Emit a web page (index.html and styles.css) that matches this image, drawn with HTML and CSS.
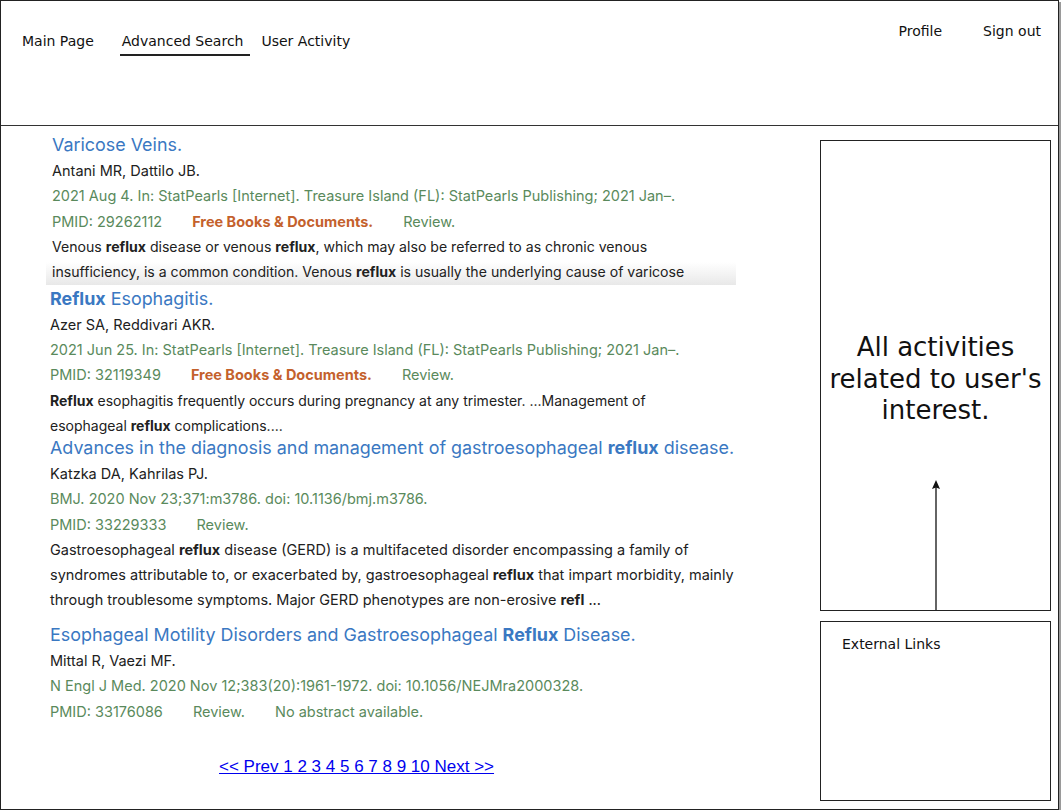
FILE: index.html
```html
<!DOCTYPE html>
<html lang="en">
<head>
<meta charset="utf-8">
<title>Advanced Search</title>
<link rel="stylesheet" href="styles.css">
</head>
<body>
<div class="frame">
  <header class="header">
    <nav class="nav-left">
      <a class="nav-item nav-main">Main Page</a>
      <a class="nav-item nav-active">Advanced Search</a>
      <a class="nav-item nav-activity">User Activity</a>
    </nav>
    <nav class="nav-right">
      <a class="nav-item">Profile</a>
      <a class="nav-item">Sign out</a>
    </nav>
  </header>
  <div class="main">
    <section class="results">
      <article class="doc doc-1">
        <div class="title">Varicose Veins.</div>
        <div class="authors">Antani MR, Dattilo JB.</div>
        <div class="cite">2021 Aug 4. In: StatPearls [Internet]. Treasure Island (FL): StatPearls Publishing; 2021 Jan–.</div>
        <div class="meta"><span>PMID: 29262112</span><span class="free">Free Books &amp; Documents.</span><span>Review.</span></div>
        <div class="abstract abstract-fade">Venous <b>reflux</b> disease or venous <b>reflux</b>, which may also be referred to as chronic venous<br>insufficiency, is a common condition. Venous <b>reflux</b> is usually the underlying cause of varicose</div>
      </article>
      <article class="doc doc-2">
        <div class="title"><b>Reflux</b> Esophagitis.</div>
        <div class="authors">Azer SA, Reddivari AKR.</div>
        <div class="cite">2021 Jun 25. In: StatPearls [Internet]. Treasure Island (FL): StatPearls Publishing; 2021 Jan–.</div>
        <div class="meta"><span>PMID: 32119349</span><span class="free">Free Books &amp; Documents.</span><span>Review.</span></div>
        <div class="abstract abstract-narrow"><b>Reflux</b> esophagitis frequently occurs during pregnancy at any trimester. ...Management of<br>esophageal <b>reflux</b> complications....</div>
      </article>
      <article class="doc doc-3">
        <div class="title">Advances in the diagnosis and management of gastroesophageal <b>reflux</b> disease.</div>
        <div class="authors">Katzka DA, Kahrilas PJ.</div>
        <div class="cite">BMJ. 2020 Nov 23;371:m3786. doi: 10.1136/bmj.m3786.</div>
        <div class="meta"><span>PMID: 33229333</span><span>Review.</span></div>
        <div class="abstract">Gastroesophageal <b>reflux</b> disease (GERD) is a multifaceted disorder encompassing a family of<br>syndromes attributable to, or exacerbated by, gastroesophageal <b>reflux</b> that impart morbidity, mainly<br>through troublesome symptoms. Major GERD phenotypes are non-erosive <b>refl</b> ...</div>
      </article>
      <article class="doc doc-4">
        <div class="title">Esophageal Motility Disorders and Gastroesophageal <b>Reflux</b> Disease.</div>
        <div class="authors">Mittal R, Vaezi MF.</div>
        <div class="cite">N Engl J Med. 2020 Nov 12;383(20):1961-1972. doi: 10.1056/NEJMra2000328.</div>
        <div class="meta"><span>PMID: 33176086</span><span>Review.</span><span>No abstract available.</span></div>
      </article>
      <div class="pager"><a href="#">&lt;&lt; Prev 1 2 3 4 5 6 7 8 9 10 Next &gt;&gt;</a></div>
    </section>
    <aside class="sidebar">
      <div class="box box-activity">
        <div class="activity-text">All activities<br>related to user's<br>interest.</div>
        <svg class="arrow" width="12" height="130" viewBox="0 0 12 130">
          <line x1="6" y1="6" x2="6" y2="130" stroke="#111" stroke-width="1.3"/>
          <path d="M6 0 L10 9 L6 7.5 L2 9 Z" fill="#111"/>
        </svg>
      </div>
      <div class="box box-links">
        <div class="links-title">External Links</div>
      </div>
    </aside>
  </div>
</div>
</body>
</html>
```

FILE: styles.css
```css
* { box-sizing: border-box; }

html, body {
  margin: 0;
  padding: 0;
  background: #fff;
}

.frame {
  width: 1059px;
  height: 810px;
  border: 1.5px solid #222;
  box-shadow: 2px 2px 0 #9a9a9a;
  background: #fff;
  display: flex;
  flex-direction: column;
  overflow: hidden;
}

/* ---------- header ---------- */
.header {
  height: 125px;
  flex: none;
  border-bottom: 1.5px solid #333;
  display: flex;
  justify-content: space-between;
  font-family: "DejaVu Sans", Verdana, sans-serif;
  font-size: 14px;
  color: #111;
}

.nav-item {
  color: #111;
  text-decoration: none;
  white-space: nowrap;
}

.nav-left {
  display: flex;
  align-items: flex-start;
  padding-left: 21px;
  padding-top: 32px;
}

.nav-main { margin-right: 26px; }

.nav-active {
  padding: 0 7px 5px 2px;
  border-bottom: 2px solid #222;
  margin-right: 11px;
}

.nav-right {
  display: flex;
  align-items: flex-start;
  gap: 41px;
  padding-top: 22px;
  padding-right: 17px;
}

/* ---------- main ---------- */
.main {
  flex: 1;
  display: flex;
  justify-content: space-between;
}

.results {
  width: 760px;
  padding-left: 49px;
  padding-top: 6px;
  font-family: Inter, "Liberation Sans", Arial, sans-serif;
  font-size: 14.5px;
  color: #212121;
}

.doc {
  line-height: 25.3px;
}

.doc-1 { padding-left: 2px; margin-bottom: 1px; }
.doc-2 { margin-bottom: -3px; }
.doc-3 { margin-bottom: 10px; line-height: 25.1px; }

.title {
  font-size: 17.9px;
  color: #3a78c2;
  line-height: 26px;
  white-space: nowrap;
}

.title b { font-weight: 700; }

.authors { color: #212121; }

.cite {
  color: #5a8a5c;
  white-space: nowrap;
}

.meta {
  display: flex;
  gap: 30px;
  color: #5a8a5c;
}

.free {
  color: #c4612c;
  font-weight: 700;
}

.abstract { white-space: nowrap; }
.abstract b { font-weight: 700; }

.abstract-narrow { font-size: 14px; }

.abstract-fade {
  font-size: 14.1px;
  width: 690px;
  margin-left: -6px;
  padding-left: 6px;
  height: 51px;
  overflow: hidden;
  background: linear-gradient(to bottom, #fff 0, #fff 55%, #f0f0f0 85%, #e8e8e8 100%);
}

.pager {
  margin-top: 33px;
  padding-left: 169px;
  font-family: "Liberation Sans", Arial, sans-serif;
  font-size: 17px;
}

.pager a { color: #0000ee; }

/* ---------- sidebar ---------- */
.sidebar {
  width: 240px;
  padding: 14px 7px 8px 0;
  display: flex;
  flex-direction: column;
  gap: 10px;
  font-family: "DejaVu Sans", Verdana, sans-serif;
  color: #111;
}

.box {
  width: 231px;
  margin-left: auto;
  border: 1.5px solid #222;
}

.box-activity {
  height: 471px;
  display: flex;
  flex-direction: column;
  align-items: center;
}

.activity-text {
  padding-top: 191px;
  font-size: 26px;
  line-height: 31.5px;
  text-align: center;
  white-space: nowrap;
}

.arrow {
  margin-top: auto;
  display: block;
}

.box-links {
  flex: 1;
  padding: 14px 0 0 21px;
}

.links-title {
  font-size: 14px;
}
```
